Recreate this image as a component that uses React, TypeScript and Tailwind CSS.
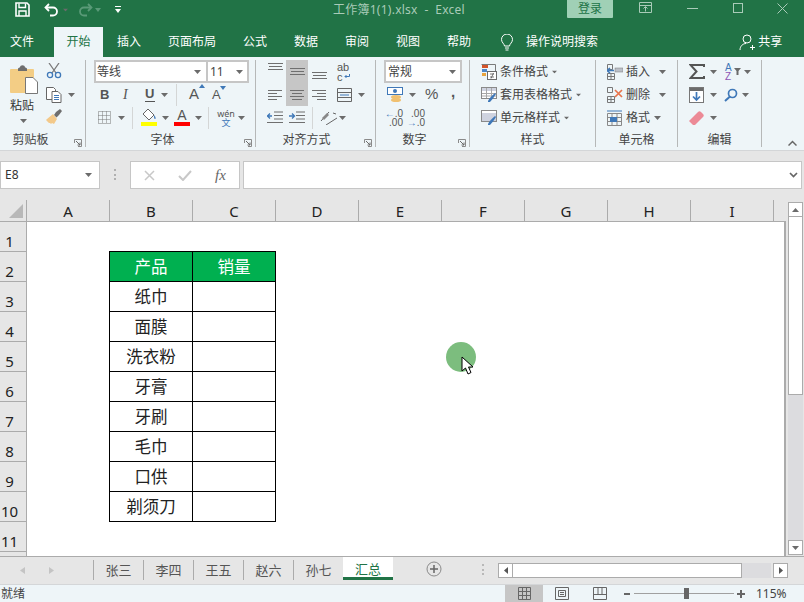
import type { ReactNode } from 'react';

const COLUMNS = ['A', 'B', 'C', 'D', 'E', 'F', 'G', 'H', 'I'];
const ROWS = ['1', '2', '3', '4', '5', '6', '7', '8', '9', '10', '11'];
const PRODUCTS = ['纸巾', '面膜', '洗衣粉', '牙膏', '牙刷', '毛巾', '口供', '剃须刀'];
const SHEETS = ['张三', '李四', '王五', '赵六', '孙七'];
const TABS = ['插入', '页面布局', '公式', '数据', '审阅', '视图', '帮助'];

function Caret({ className = '' }: { className?: string }) {
  return (
    <svg width="7" height="4" viewBox="0 0 7 4" className={`shrink-0 ${className}`}>
      <path d="M0 0h7L3.5 4z" fill="#6b6b6b" />
    </svg>
  );
}

function Icon({ size = 16, w, h, children, className = '' }: { size?: number; w?: number; h?: number; children: ReactNode; className?: string }) {
  const width = w ?? size;
  const height = h ?? size;
  return (
    <svg width={width} height={height} viewBox={`0 0 ${width} ${height}`} fill="none" className={`shrink-0 ${className}`}>
      {children}
    </svg>
  );
}

function Launcher() {
  return (
    <svg width="8" height="8" viewBox="0 0 8 8" fill="none" className="absolute right-[3px] bottom-[0px]">
      <path d="M0.5 4V0.5H7.5V7.5H4" stroke="#8a8a8a" />
      <path d="M2 2L6 6M6 3.5V6H3.5" stroke="#6b6b6b" />
    </svg>
  );
}

function Group({ width, label, labelClass = '', launcher, children }: { width: string; label: string; labelClass?: string; launcher?: boolean; children: ReactNode }) {
  return (
    <div className={`relative flex h-[87px] shrink-0 flex-col border-r border-[#b6b8b8] ${width}`}>
      <div className="h-[69px] shrink-0">{children}</div>
      <div className={`mt-[1px] h-[20px] shrink-0 text-center text-[12px] leading-[20px] text-[#444] ${labelClass}`}>{label}</div>
      {launcher && <Launcher />}
    </div>
  );
}

function Row({ className = '', children }: { className?: string; children: ReactNode }) {
  return <div className={`flex h-[23px] items-center ${className}`}>{children}</div>;
}

function Lines({ kind }: { kind: 'left' | 'center' | 'right' }) {
  const rows = kind === 'left' ? ['M0 2.5h14', 'M0 5.5h9', 'M0 8.5h14', 'M0 11.5h9'] : kind === 'center' ? ['M0 2.5h14', 'M2 5.5h10', 'M0 8.5h14', 'M2 11.5h10'] : ['M0 2.5h14', 'M5 5.5h9', 'M0 8.5h14', 'M5 11.5h9'];
  return (
    <Icon w={14} h={14}>
      <path d={rows.join('')} stroke="#6f6f6f" />
    </Icon>
  );
}

function VAlign() {
  return (
    <Icon w={15} h={8}>
      <path d="M0 .5h15M1 3.500h13M0 6.500h15" stroke="#6f6f6f" />
    </Icon>
  );
}

function Vline() {
  return <div className="h-[22px] w-px bg-[#d4d6d6]" />;
}

function StyleIcon({ variant }: { variant: 'cond' | 'table' | 'cell' }) {
  if (variant === 'cond') {
    return (
      <Icon w={16} h={16}>
        <path d="M0.5 0.5h14v9" stroke="#7a7a7a" />
        <rect x="1" y="1" width="6" height="3" fill="#d2542a" />
        <rect x="1" y="5" width="5" height="3" fill="#4f86c6" />
        <rect x="1" y="9" width="4" height="3" fill="#e8a33d" />
        <rect x="6.5" y="7.5" width="9" height="8" fill="#fff" stroke="#6b6b6b" />
        <path d="M9 10h4M9 13h4M12.5 9l-2.5 5.5" stroke="#555" strokeWidth="0.8" />
      </Icon>
    );
  }
  return (
    <Icon w={16} h={16}>
      <rect x="0.5" y="0.5" width="15" height="11" fill="#fff" stroke="#8a8a8a" />
      <rect x="1" y={variant === 'table' ? 1 : 3} width="14" height={variant === 'table' ? 3 : 8} fill="#cfd3e0" />
      {variant === 'table' && <path d="M5.5 1v10M10.5 1v10M1 6.5h14M1 9h14" stroke="#a8a8a8" />}
      <path d="M7 14c1-3 4-5 7-8l1 1c-2 3-4 6-6 8H7z" fill="#3f78b8" />
    </Icon>
  );
}

function TitleBar() {
  return (
    <div className="flex h-[24px] items-start text-[#fff]">
      <div className="ml-[15px] mt-[2px] flex items-center">
        <Icon w={15} h={15}>
          <path d="M1 1h11l2 2v11H1z" stroke="#fff" strokeWidth="1.6" />
          <path d="M4 1.5v4h6.5v-4M4 14v-5h7v5" stroke="#fff" strokeWidth="1.4" />
        </Icon>
        <Icon w={16} h={14} className="ml-[14px]">
          <path d="M5 1L1.5 4.5 5 8" stroke="#fff" strokeWidth="1.8" />
          <path d="M2 4.5h7a4 4 0 0 1 0 8H6" stroke="#fff" strokeWidth="1.8" />
        </Icon>
        <Caret className="ml-[2px] scale-75" />
        <Icon w={16} h={14} className="ml-[8px]">
          <path d="M11 1l3.5 3.5L11 8" stroke="#5a9a78" strokeWidth="1.8" />
          <path d="M14 4.5H7a4 4 0 0 0 0 8h3" stroke="#5a9a78" strokeWidth="1.8" />
        </Icon>
        <svg width="6" height="4" viewBox="0 0 6 4" className="ml-[2px] shrink-0">
          <path d="M0 0h6L3 4z" fill="#5a9a78" />
        </svg>
        <Icon w={6} h={7} className="ml-[14px]">
          <path d="M0 .5h6" stroke="#fff" />
          <path d="M0 3h6L3 7z" fill="#fff" />
        </Icon>
      </div>
      <div className="ml-[212px] mt-[1px] w-[132px] whitespace-pre text-[12px] leading-[17px] tracking-[0.25px] text-[#a9cbb8]">工作簿1(1).xlsx  -  Excel</div>
      <div className="ml-[102px] flex h-[18px] w-[46px] items-center justify-center rounded-b-[1px] bg-[#a0d0b6] text-[12px] text-[#217346]">登录</div>
      <Icon w={14} h={12} className="ml-[26px] mt-[2px]">
        <path d="M.5.5h12v10H.5zM.5 3.5h12M6.5 9.5V5M4.5 6.5l2-2 2 2" stroke="#a9cbb8" />
      </Icon>
      <div className="ml-[34px] mt-[8px] h-px w-[11px] bg-[#a9cbb8]" />
      <div className="ml-[35px] mt-[3px] h-[10px] w-[10px] border border-[#a9cbb8]" />
      <Icon w={11} h={11} className="ml-[34px] mt-[3px]">
        <path d="M.5.5l10 10M10.5.5l-10 10" stroke="#a9cbb8" />
      </Icon>
    </div>
  );
}

function TabBar() {
  return (
    <div className="flex h-[33px] items-start text-[12px] text-white">
      <div className="ml-[10px] mt-[3px] h-[30px] w-[24px] leading-[30px]">文件</div>
      <div className="ml-[20px] mt-[3px] h-[30px] w-[49px] bg-[#eef5f8] text-center leading-[30px] text-[#217346]">开始</div>
      <div className="ml-[14px] mt-[3px] flex gap-[27px] leading-[30px]">
        {TABS.map((tab) => (
          <span key={tab}>{tab}</span>
        ))}
      </div>
      <Icon w={14} h={17} className="ml-[29px] mt-[10px]">
        <path d="M4.5 12c0-2-3-3.5-3-6.5a5.5 5.5 0 0 1 11 0c0 3-3 4.500-3 6.500zM5 14h4M5.500 16h3" stroke="#fff" />
      </Icon>
      <span className="ml-[12px] mt-[3px] leading-[30px]">操作说明搜索</span>
      <Icon w={16} h={17} className="ml-[141px] mt-[10px]">
        <circle cx="8" cy="5" r="4" stroke="#fff" />
        <path d="M1 16c0-4 3-6.500 6-6.500M11 13.500h5M13.500 11v5" stroke="#fff" />
      </Icon>
      <span className="ml-[3px] mt-[3px] leading-[30px]">共享</span>
    </div>
  );
}

function ClipboardGroup() {
  return (
    <div className="flex">
      <div className="ml-[10px] flex w-[28px] flex-col items-start">
        <Icon w={28} h={29} className="mt-[5px]">
          <rect x="0" y="4" width="24" height="24" rx="1" fill="#f3cd85" />
          <path d="M8 4c0-1 1-1.500 2-1.500 0-3 5-3 5 0 1 0 2 .5 2 1.500v2H8z" fill="#6e6e6e" />
          <path d="M15.500 12.500H23l4.500 4.500v11.500h-12z" fill="#fff" stroke="#777" />
        </Icon>
        <span className="mt-[4px] text-[12px] leading-[16px] text-[#333]">粘贴</span>
        <Caret className="ml-[10px] mt-[5px]" />
      </div>
      <div className="ml-[8px] flex flex-col pt-[3px]">
        <Icon w={16} h={16}>
          <path d="M3 0l7 10M13 0L6 10" stroke="#7a7a7a" strokeWidth="1.3" />
          <circle cx="4" cy="12" r="2.600" stroke="#3f78b8" strokeWidth="1.3" />
          <circle cx="12" cy="12" r="2.600" stroke="#3f78b8" strokeWidth="1.3" />
        </Icon>
        <div className="mt-[8px] flex items-center">
          <Icon w={16} h={16}>
            <path d="M.5.5h7l2 2v10H.5z" fill="#fff" stroke="#666" />
            <path d="M6 4.500h6l3 3v8H6z" fill="#fff" stroke="#666" />
            <path d="M8 8.500h5M8 10.500h5M8 12.500h5" stroke="#3f78b8" />
          </Icon>
          <Caret className="ml-[6px]" />
        </div>
        <Icon w={16} h={16} className="mt-[6px]">
          <path d="M8 6l2.500 2.500L13 6l3-4-2-2-4 3z" fill="#6e6e6e" />
          <path d="M7 5l4 5-3 5-2-1-1 1-1-1-1 0-3-3 1-1z" fill="#f3c98a" />
        </Icon>
      </div>
    </div>
  );
}

function FontGroup() {
  return (
    <div>
      <div className="ml-[8px] flex h-[23px] w-[155px] border-2 border-[#c6c6c6] bg-white text-[12px] text-[#444]">
        <div className="flex w-[112px] items-center justify-between border-r-2 border-[#c6c6c6] pl-[1px] pr-[5px]">
          等线
          <Caret />
        </div>
        <div className="flex flex-1 items-center justify-between pl-[2px] pr-[4px]">
          11
          <Caret />
        </div>
      </div>
      <Row className="ml-[14px] font-['Liberation_Sans',sans-serif] text-[#555]">
        <b className="w-[8px] text-[13px]">B</b>
        <i className="ml-[15px] w-[8px] font-['Liberation_Serif',serif] text-[14px]">I</i>
        <span className="ml-[14px] w-[10px] border-b border-[#555] text-[13px] font-bold leading-[14px]">U</span>
        <Caret className="ml-[6px]" />
        <div className="ml-[8px]"><Vline /></div>
        <div className="relative ml-[12px] text-[15px]">
          A
          <svg width="6" height="4" viewBox="0 0 6 4" className="absolute -right-[6px] top-[1px]"><path d="M0 4h6L3 0z" fill="#3f78b8" /></svg>
        </div>
        <div className="relative ml-[13px] text-[13px]">
          A
          <svg width="6" height="4" viewBox="0 0 6 4" className="absolute -right-[5px] top-[1px]"><path d="M0 0h6L3 4z" fill="#3f78b8" /></svg>
        </div>
      </Row>
      <Row className="ml-[12px]">
        <Icon w={13} h={13}>
          <path d="M.5.500h12v12H.500zM4.500.5v12M8.500.5v12M.5 4.500h12M.5 8.500h12" stroke="#777" strokeDasharray="1 1" />
        </Icon>
        <Caret className="ml-[7px]" />
        <div className="ml-[7px]"><Vline /></div>
        <div className="ml-[8px] flex w-[16px] flex-col items-center">
          <Icon w={14} h={12}>
            <path d="M6 0l6 6-5 5-6-6z" fill="#fff" stroke="#666" />
            <path d="M12 6c2 2 2 4 1 4s-1-2-1-4z" fill="#3f78b8" />
          </Icon>
          <div className="mt-[1px] h-[4px] w-[16px] bg-[#ffff00]" />
        </div>
        <Caret className="ml-[5px]" />
        <div className="ml-[5px] flex w-[16px] flex-col items-center font-['Liberation_Sans',sans-serif] text-[14px] leading-[12px] text-[#555]">
          A
          <div className="mt-[1px] h-[4px] w-[16px] bg-[#ff0000]" />
        </div>
        <Caret className="ml-[5px]" />
        <div className="ml-[6px]"><Vline /></div>
        <div className="ml-[9px] flex w-[16px] flex-col items-center text-[9px] leading-[9px] text-[#555]">
          <span>wén</span>
          <span className="text-[#3f78b8]">文</span>
        </div>
        <Caret className="ml-[4px]" />
      </Row>
    </div>
  );
}

function AlignGroup() {
  return (
    <div className="flex">
      <div className="ml-[8px] grid grid-cols-[22px_22px_22px] grid-rows-[23px_23px]">
        <div className="flex items-start justify-center pt-[3px]"><VAlign /></div>
        <div className="row-span-2 flex flex-col bg-[#c6c6c6]">
          <div className="flex h-[23px] items-center justify-center"><VAlign /></div>
          <div className="flex h-[23px] items-center justify-center"><Lines kind="center" /></div>
        </div>
        <div className="flex items-end justify-center pb-[3px]"><VAlign /></div>
        <div className="flex items-center justify-center"><Lines kind="left" /></div>
        <div className="flex items-center justify-center"><Lines kind="right" /></div>
      </div>
      <div className="ml-[7px] flex flex-col">
        <div className="flex h-[23px] items-center font-['Liberation_Sans',sans-serif] text-[11px] leading-[10px] text-[#555]">
          <div className="flex w-[15px] flex-col">
            <span>ab</span>
            <span className="flex items-center">c
              <svg width="6" height="5" viewBox="0 0 6 5" className="ml-[1px]"><path d="M5.500 0v2.500H1M2.500 1L1 2.500 2.500 4" stroke="#3f78b8" fill="none" /></svg>
            </span>
          </div>
        </div>
        <Row>
          <Icon w={15} h={14}>
            <path d="M.5.500h14v13H.500zM.5 4.500h14M.5 9.500h14" stroke="#666" />
            <path d="M3 7h9" stroke="#3f78b8" />
          </Icon>
          <Caret className="ml-[6px]" />
        </Row>
      </div>
    </div>
  );
}

function AlignThirdRow() {
  return (
    <Row className="ml-[11px]">
      <Icon w={16} h={13}>
        <path d="M7 1h9M7 4.500h9M7 8h9M0 11.500h16" stroke="#6f6f6f" />
        <path d="M0 5h5M3 2.500L.5 5 3 7.500" stroke="#3f78b8" strokeWidth="1.300" />
      </Icon>
      <Icon w={16} h={13} className="ml-[6px]">
        <path d="M7 1h9M7 4.500h9M7 8h9M0 11.500h16" stroke="#6f6f6f" />
        <path d="M0 5h5M3 2.500L5.500 5 3 7.500" stroke="#3f78b8" strokeWidth="1.300" />
      </Icon>
      <div className="ml-[7px]"><Vline /></div>
      <Icon w={17} h={15} className="ml-[7px]">
        <path d="M1 11L9 2M6 15l11-7M13 3l3 1" stroke="#666" />
        <path d="M2 8l5-5 2 2-5 5z" fill="#888" />
      </Icon>
      <Caret className="ml-[2px]" />
    </Row>
  );
}

function NumberGroup() {
  return (
    <div>
      <div className="ml-[8px] flex h-[23px] w-[78px] items-center justify-between border-2 border-[#c6c6c6] bg-white pl-[2px] pr-[4px] text-[12px] text-[#444]">
        常规
        <Caret />
      </div>
      <Row className="ml-[11px]">
        <Icon w={17} h={17}>
          <rect x="0.500" y="1.500" width="15" height="7" fill="#fff" stroke="#3f78b8" />
          <circle cx="8" cy="5" r="2" fill="#3f78b8" />
          <ellipse cx="9" cy="11" rx="5" ry="2" fill="#f0c070" />
          <ellipse cx="9" cy="14" rx="5" ry="2" fill="#f0c070" />
        </Icon>
        <Caret className="ml-[5px]" />
        <span className="ml-[9px] w-[14px] font-['Liberation_Sans',sans-serif] text-[15px] text-[#555]">%</span>
        <span className="ml-[12px] -mt-[6px] font-['Liberation_Sans',sans-serif] text-[15px] font-bold leading-[12px] text-[#555]">,</span>
      </Row>
      <Row className="ml-[11px] font-['Liberation_Sans',sans-serif] text-[10px] leading-[9px] text-[#555]">
        <div className="flex w-[16px] flex-col items-end">
          <span><span className="text-[#3f78b8]">←</span>.0</span>
          <span>.00</span>
        </div>
        <div className="ml-[7px] flex w-[15px] flex-col items-end">
          <span>.00</span>
          <span><span className="text-[#3f78b8]">→</span>.0</span>
        </div>
      </Row>
    </div>
  );
}

function StylesGroup() {
  const items: ['cond' | 'table' | 'cell', string][] = [['cond', '条件格式'], ['table', '套用表格格式'], ['cell', '单元格样式']];
  return (
    <div className="ml-[11px]">
      {items.map(([variant, text]) => (
        <Row key={text} className="text-[12px] text-[#444]">
          <StyleIcon variant={variant} />
          <span className="ml-[3px]">{text}</span>
          <Caret className="ml-[3px] scale-75" />
        </Row>
      ))}
    </div>
  );
}

function CellsGroup() {
  return (
    <div className="ml-[11px] text-[12px] text-[#444]">
      <Row>
        <Icon w={16} h={16}>
          <path d="M.5.500h5v5h-5zM.5 9.500h7v6h-7zM4 9.500v6M.5 12.500h7" stroke="#777" />
          <rect x="8" y="4" width="8" height="4" fill="#bcc0c8" stroke="#777" strokeWidth="0.500" />
          <path d="M0 6.500h7M3 4l-3 2.500L3 9" stroke="#3f78b8" strokeWidth="1.500" />
        </Icon>
        <span className="ml-[3px] w-[24px]">插入</span>
        <Caret className="ml-[9px]" />
      </Row>
      <Row>
        <Icon w={16} h={16}>
          <path d="M.5.500h5v5h-5zM.5 9.500h7v6h-7zM4 9.500v6M.5 12.500h7" stroke="#777" />
          <path d="M8 3l7 7M15 3l-7 7" stroke="#e8734a" strokeWidth="1.700" />
        </Icon>
        <span className="ml-[3px] w-[24px]">删除</span>
        <Caret className="ml-[9px]" />
      </Row>
      <Row>
        <Icon w={16} h={16}>
          <path d="M0 1h15" stroke="#3f78b8" />
          <path d="M.5 3.500h14v12H.500zM.5 7.500h14M.5 11.500h14M5 3.500v12M10 3.500v12" stroke="#888" />
          <rect x="3" y="7" width="7" height="5" fill="#3f78b8" />
        </Icon>
        <span className="ml-[3px] w-[24px]">格式</span>
        <Caret className="ml-[4px]" />
      </Row>
    </div>
  );
}

function EditGroup() {
  return (
    <div className="ml-[11px]">
      <Row>
        <Icon w={16} h={15}>
          <path d="M15 3V1H1.500l6 6.500-6 6.500H15v-2" stroke="#555" strokeWidth="2" />
        </Icon>
        <Caret className="ml-[5px]" />
        <div className="ml-[8px] flex w-[9px] flex-col font-['Liberation_Sans',sans-serif] text-[10px] leading-[9px]">
          <span className="text-[#3f78b8]">A</span>
          <span className="text-[#8d55b5]">Z</span>
        </div>
        <svg width="7" height="7" viewBox="0 0 7 7" className="shrink-0"><path d="M0 0h7L4.500 3v4h-2V3z" fill="#6b6b6b" /></svg>
        <Caret className="ml-[3px]" />
      </Row>
      <Row>
        <Icon w={15} h={16}>
          <rect x="0.500" y="0.500" width="14" height="15" fill="#fff" stroke="#777" />
          <rect x="1" y="1" width="13" height="3" fill="#6b6b6b" />
          <path d="M7.500 5v8M4 9.500l3.500 3.500L11 9.500" stroke="#3f78b8" strokeWidth="1.700" />
        </Icon>
        <Caret className="ml-[6px]" />
        <Icon w={14} h={14} className="ml-[7px]">
          <circle cx="8.500" cy="5.500" r="4" stroke="#3f78b8" strokeWidth="1.700" />
          <path d="M6 8.500L1 13" stroke="#3f78b8" strokeWidth="2" />
        </Icon>
        <Caret className="ml-[4px]" />
      </Row>
      <Row>
        <Icon w={15} h={14}>
          <path d="M0 10l9-9c1-1 2-1 3 0l2 2c1 1 1 2 0 3l-8 8H4z" fill="#ec8a96" />
        </Icon>
        <Caret className="ml-[6px]" />
      </Row>
    </div>
  );
}

function Ribbon() {
  return (
    <div className="flex h-[94px] items-start border-b border-[#d4d6d8] bg-[#eef5f8] pt-[3px]">
      <Group width="w-[86px]" label="剪贴板" labelClass="pr-[24px]" launcher><ClipboardGroup /></Group>
      <Group width="w-[170px]" label="字体" labelClass="pr-[16px]" launcher><FontGroup /></Group>
      <Group width="w-[120px]" label="对齐方式" labelClass="pr-[18px]" launcher>
        <AlignGroup />
        <AlignThirdRow />
      </Group>
      <Group width="w-[94px]" label="数字" labelClass="pr-[16px]" launcher><NumberGroup /></Group>
      <Group width="w-[126px]" label="样式"><StylesGroup /></Group>
      <Group width="w-[82px]" label="单元格"><CellsGroup /></Group>
      <Group width="w-[84px]" label="编辑"><EditGroup /></Group>
      <Icon w={9} h={6} className="ml-[26px] mt-[80px]">
        <path d="M.5 5.500l4-4 4 4" stroke="#666" strokeWidth="1.500" />
      </Icon>
    </div>
  );
}

function FormulaBar() {
  return (
    <div className="flex h-[49px] items-start bg-[#e6e6e6] pt-[10px]">
      <div className="flex h-[28px] w-[100px] items-center justify-between border border-[#c6c6c6] bg-white pl-[4px] pr-[7px] text-[12px] text-[#333]">
        E8
        <Caret />
      </div>
      <div className="ml-[14px] mt-[8px] flex h-[11px] w-[2px] flex-col justify-between">
        <div className="h-[2px] bg-[#b0b0b0]" />
        <div className="h-[2px] bg-[#b0b0b0]" />
        <div className="h-[2px] bg-[#b0b0b0]" />
      </div>
      <div className="ml-[14px] flex h-[28px] w-[110px] items-center border border-[#c6c6c6] bg-white">
        <Icon w={11} h={11} className="ml-[13px]">
          <path d="M1 1l9 9M10 1l-9 9" stroke="#c8c8c8" strokeWidth="1.500" />
        </Icon>
        <Icon w={14} h={11} className="ml-[23px]">
          <path d="M1 6l4 4 8-9" stroke="#c8c8c8" strokeWidth="2" />
        </Icon>
        <span className="ml-[23px] font-['Liberation_Serif',serif] text-[15px] italic text-[#666]">fx</span>
      </div>
      <div className="ml-[3px] flex h-[28px] w-[559px] items-center justify-end border border-[#c6c6c6] bg-white pr-[3px]">
        <Icon w={9} h={6}>
          <path d="M1 1l3.500 3.500L8 1" stroke="#666" strokeWidth="1.700" />
        </Icon>
      </div>
    </div>
  );
}

function ColumnHeader() {
  return (
    <div className="flex h-[22px] bg-[#e6e6e6]">
      <div className="flex w-[27px] shrink-0 items-end justify-end border-r border-b border-[#ababab] pb-[3px] pr-[3px]">
        <svg width="14" height="14" viewBox="0 0 14 14"><path d="M14 0v14H0z" fill="#b8b8b8" /></svg>
      </div>
      {COLUMNS.map((col) => (
        <div key={col} className="w-[83px] shrink-0 border-r border-b border-[#ababab] text-center text-[15px] leading-[23px] text-[#222]">
          {col}
        </div>
      ))}
      <div className="w-[12px] shrink-0 border-b border-[#ababab]" />
    </div>
  );
}

function SheetTable() {
  return (
    <div className="ml-[82px] mt-[29px] grid w-[167px] grid-cols-[83px_83px] border-l border-t border-black text-center text-[16.5px] leading-[29px] text-[#222]">
      <div className="h-[30px] border-r border-b border-black bg-[#00b050] text-white">产品</div>
      <div className="h-[30px] border-r border-b border-black bg-[#00b050] text-white">销量</div>
      {PRODUCTS.map((product) => (
        <div key={product} className="contents">
          <div className="h-[30px] border-r border-b border-black">{product}</div>
          <div className="h-[30px] border-r border-b border-black" />
        </div>
      ))}
    </div>
  );
}

function VerticalScrollbar() {
  return (
    <div className="ml-[2px] flex h-[355px] w-[15px] shrink-0 flex-col bg-[#e6e6e6] pt-[2px]">
      <div className="flex h-[15px] items-center justify-center border border-[#ababab] bg-white">
        <svg width="7" height="4" viewBox="0 0 7 4"><path d="M0 4h7L3.500 0z" fill="#6b6b6b" /></svg>
      </div>
      <div className="h-[178px] border border-t-0 border-[#ababab] bg-white" />
      <div className="flex-1 bg-[#dcdcdf]" />
      <div className="flex h-[15px] items-center justify-center border border-[#ababab] bg-white">
        <Caret />
      </div>
    </div>
  );
}

function Sheet() {
  return (
    <div className="relative flex h-[334px] overflow-visible">
      <div className="h-[334px] w-[27px] shrink-0 overflow-hidden border-r border-[#ababab] bg-[#e6e6e6]">
        {ROWS.map((row) => (
          <div key={row} className="flex h-[30px] w-full items-end border-b border-[#ababab] text-[15px] leading-[20px] text-[#222]">
            <span className="w-[19px] text-center">{row}</span>
          </div>
        ))}
      </div>
      <div className="h-[334px] w-[759px] shrink-0 border-r-2 border-[#ababab] bg-white">
        <SheetTable />
      </div>
      <div className="-mt-[22px]">
        <VerticalScrollbar />
      </div>
      {/* click highlight and mouse pointer */}
      <div className="absolute left-[446px] top-[120px] h-[30px] w-[30px] rounded-full bg-[#7cbd7e]" />
      <svg width="14" height="20" viewBox="0 0 14 20" className="absolute left-[461px] top-[134px]">
        <path d="M1 1v14l3.500-3 2.500 6 3-1.500-2.500-5.500H12z" fill="#fff" stroke="#000" />
      </svg>
    </div>
  );
}

function SheetTabs() {
  return (
    <div className="flex h-[28px] items-start border-t border-[#ababab] bg-[#e6e6e6]">
      <svg width="5" height="7" viewBox="0 0 5 7" className="ml-[20px] mt-[10px] shrink-0"><path d="M5 0v7L0 3.500z" fill="#c4c4c4" /></svg>
      <svg width="5" height="7" viewBox="0 0 5 7" className="ml-[24px] mt-[10px] shrink-0"><path d="M0 0v7l5-3.500z" fill="#c4c4c4" /></svg>
      <div className="ml-[39px] flex">
        {SHEETS.map((sheet) => (
          <div key={sheet} className="mt-[3px] h-[20px] w-[50px] border-l border-[#ababab] text-center text-[13px] leading-[20px] text-[#555]">
            {sheet}
          </div>
        ))}
        <div className="h-[23px] w-[50px] border-b-[3px] border-[#217346] bg-white text-center text-[13px] leading-[24px] text-[#217346]">汇总</div>
      </div>
      <Icon w={16} h={16} className="ml-[33px] mt-[4px]">
        <circle cx="8" cy="8" r="7" stroke="#8a8a8a" />
        <path d="M8 4v8M4 8h8" stroke="#666" strokeWidth="1.500" />
      </Icon>
      <div className="ml-[40px] mt-[7px] flex h-[11px] w-[2px] flex-col justify-between">
        <div className="h-[2px] bg-[#b8b8b8]" />
        <div className="h-[2px] bg-[#b8b8b8]" />
        <div className="h-[2px] bg-[#b8b8b8]" />
      </div>
      <div className="ml-[14px] mt-[6px] flex h-[15px] w-[290px]">
        <div className="flex w-[15px] items-center justify-center border border-[#ababab] bg-white">
          <svg width="4" height="7" viewBox="0 0 4 7"><path d="M4 0v7L0 3.500z" fill="#555" /></svg>
        </div>
        <div className="w-[229px] border-y border-r border-[#ababab] bg-white" />
        <div className="w-[29px] bg-[#dcdcdf]" />
        <div className="ml-[2px] flex w-[15px] items-center justify-center border border-[#ababab] bg-white">
          <svg width="4" height="7" viewBox="0 0 4 7"><path d="M0 0v7l4-3.500z" fill="#555" /></svg>
        </div>
      </div>
    </div>
  );
}

function StatusBar() {
  return (
    <div className="flex h-[18px] items-center border-t border-[#d4d6d8] bg-[#eef5f8] text-[12px] text-[#444]">
      <span className="ml-[1px] w-[24px]">就绪</span>
      <div className="ml-[480px] flex h-full w-[38px] items-center justify-center bg-[#c6c6c6]">
        <Icon w={13} h={13}>
          <path d="M.5.500h12v12H.500zM4.500.5v12M8.500.5v12M.5 4.500h12M.5 8.500h12" stroke="#666" />
        </Icon>
      </div>
      <Icon w={14} h={13} className="ml-[12px]">
        <path d="M.5.500h13v12H.500z" stroke="#666" />
        <path d="M3.500 3.500h7v6h-7zM5 5.500h4M5 7.500h4" stroke="#666" />
      </Icon>
      <Icon w={14} h={13} className="ml-[24px]">
        <path d="M.5.500h13v12H.500zM.5 7.500h13M5 .5v7M9 .5v7" stroke="#666" />
      </Icon>
      <div className="ml-[17px] h-[2px] w-[6px] bg-[#666]" />
      <div className="ml-[4px] flex h-[10px] w-[100px] items-center">
        <div className="h-px w-[50px] bg-[#a0a0a0]" />
        <div className="h-[11px] w-[5px] bg-[#666]" />
        <div className="h-px w-[45px] bg-[#a0a0a0]" />
      </div>
      <Icon w={8} h={8} className="ml-[3px]">
        <path d="M4 0v8M0 4h8" stroke="#666" strokeWidth="2" />
      </Icon>
      <span className="ml-[11px] font-['Noto_Sans',sans-serif] text-[12px] text-[#444]">115%</span>
    </div>
  );
}

export default function App() {
  return (
    <div className="h-[602px] w-[804px] overflow-hidden bg-[#e6e6e6] font-['Noto_Sans','Noto_Sans_CJK_SC',sans-serif]">
      <div className="h-[57px] bg-[#217346]">
        <TitleBar />
        <TabBar />
      </div>
      <Ribbon />
      <FormulaBar />
      <ColumnHeader />
      <Sheet />
      <SheetTabs />
      <StatusBar />
    </div>
  );
}
